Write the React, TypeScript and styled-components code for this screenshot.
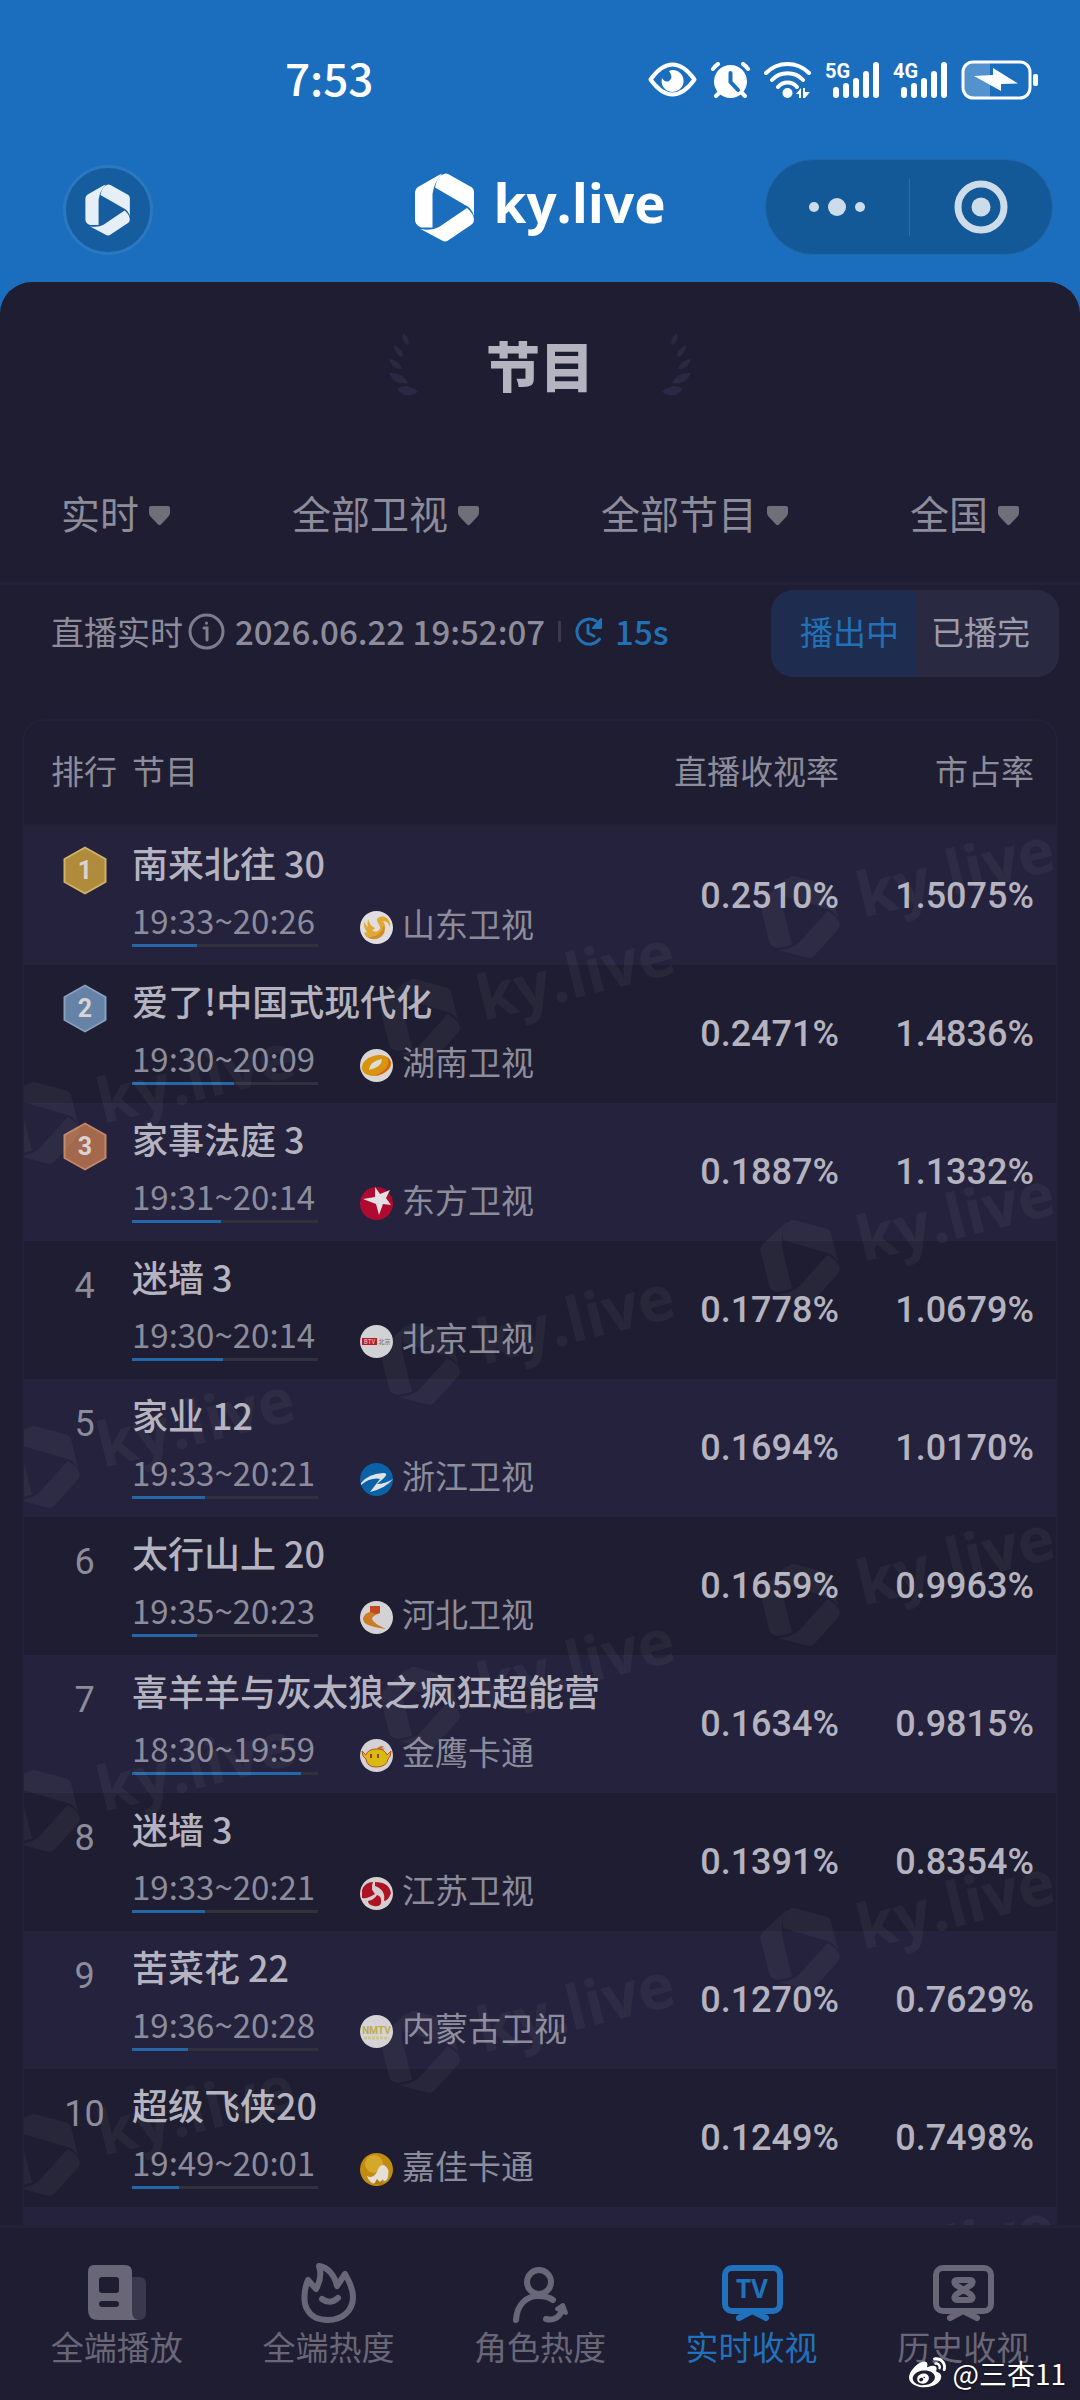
import { useState } from "react";
import type { ReactNode } from "react";
import { FaWeibo } from "react-icons/fa";
import styled, { createGlobalStyle } from "styled-components";

const GlobalStyle = createGlobalStyle`
  * {
    box-sizing: border-box;
  }
  body {
    margin: 0;
    background: #1f1d31;
    color: #8c8c9b;
    font-family: "Noto Sans CJK SC", sans-serif;
    font-size: 33px;
  }
  button, select {
    margin: 0;
    padding: 0;
    border: none;
    background: none;
    color: inherit;
    font: inherit;
    cursor: pointer;
  }
  a {
    color: inherit;
    text-decoration: none;
  }
  svg {
    display: block;
    flex-shrink: 0;
  }
`;

const numeric = `Roboto, "Noto Sans CJK SC", sans-serif`;

const Screen = styled.div`
  display: flex;
  flex-direction: column;
  height: 100vh;
  background: #1a6ebd;
`;

const StatusBar = styled.div`
  display: flex;
  align-items: center;
  justify-content: space-between;
  height: 159px;
  padding: 0 41px 0 285px;
  color: white;
  flex-shrink: 0;
`;

const Clock = styled.time`
  padding-bottom: 6px;
  font-size: 44px;
  font-weight: 500;
`;

const StatusIcons = styled.div`
  display: flex;
  align-items: center;
  gap: 14px;
`;

const TitleBar = styled.header`
  display: grid;
  grid-template-columns: 1fr auto 1fr;
  align-items: center;
  height: 96px;
  margin-bottom: 27px;
  padding: 0 27px;
  flex-shrink: 0;
`;

const HomeButton = styled.button`
  display: flex;
  align-items: center;
  justify-content: center;
  align-self: end;
  width: 90px;
  height: 90px;
  margin-left: 36px;
  border: 3px solid #2a78c0;
  border-radius: 50%;
  background: #155d9f;
  color: #e6eff8;
`;

const Brand = styled.div`
  display: flex;
  align-items: center;
  gap: 19px;
  color: white;
  font-family: "Open Sans", sans-serif;
  font-size: 53px;
  font-weight: 700;
  line-height: 60px;
  span {
    padding-bottom: 8px;
  }
`;

const Capsule = styled.div`
  display: flex;
  align-items: center;
  justify-self: end;
  width: 288px;
  height: 96px;
  border: 1px solid #2268a8;
  border-radius: 48px;
  background: #145997;
  color: #cddcea;
  button {
    display: flex;
    align-items: center;
    justify-content: center;
    flex: 1;
    height: 57px;
  }
  button + button {
    border-left: 1px solid #2a6cab;
  }
`;

const Panel = styled.main`
  flex: 1;
  min-height: 0;
  overflow: hidden;
  border-radius: 32px 32px 0 0;
  background: #1f1d31;
`;

const Heading = styled.div`
  display: flex;
  align-items: center;
  justify-content: center;
  gap: 67px;
  height: 166px;
  h1 {
    margin: 0;
    color: #b4b3bf;
    font-size: 54px;
    font-weight: 900;
    line-height: 60px;
  }
`;

const Filters = styled.div`
  display: flex;
  justify-content: space-between;
  align-items: center;
  height: 137px;
  padding: 2px 61px 0;
  border-bottom: 3px solid #232137;
`;

const Filter = styled.label`
  display: flex;
  align-items: center;
  gap: 9px;
  select {
    appearance: none;
    padding-bottom: 8px;
    font-size: 39px;
    line-height: 58px;
  }
`;

const Toolbar = styled.div`
  display: flex;
  align-items: center;
  justify-content: space-between;
  padding: 5px 21px 42px 51px;
`;

const Live = styled.div`
  display: flex;
  align-items: center;
  padding-bottom: 5px;
  line-height: 48px;
`;

const InfoButton = styled.button`
  margin: 0 10px 0 5px;
`;

const Updated = styled.time`
  font-weight: 500;
`;

const Separator = styled.span`
  width: 3px;
  height: 21px;
  margin: 0 13px;
  background: #3b394c;
`;

const Countdown = styled.span`
  display: flex;
  align-items: center;
  gap: 12px;
  color: #2270b6;
  font-weight: 500;
`;

const Toggle = styled.div`
  display: flex;
  overflow: hidden;
  border-radius: 22px;
`;

const ToggleButton = styled.button<{ $active: boolean }>`
  height: 87px;
  padding: 0 16px 6px;
  background: ${({ $active }) => ($active ? "#1e2c4f" : "#2a2942")};
  color: ${({ $active }) => ($active ? "#2270b6" : "#9d9cab")};
  &:first-child {
    padding-left: 29px;
  }
  &:last-child {
    padding-right: 29px;
  }
`;

const Card = styled.section`
  position: relative;
  margin: 0 22px;
  overflow: hidden;
  border: 2px solid #232137;
  border-radius: 22px;
`;

const Watermark = styled.svg`
  position: absolute;
  top: 0;
  left: 0;
  width: 100%;
  height: 100%;
  color: white;
  opacity: 0.04;
  pointer-events: none;
`;

const Table = styled.table`
  width: 100%;
  border-collapse: separate;
  border-spacing: 0;
  table-layout: fixed;
  th, td {
    padding: 0;
    text-align: left;
  }
  th {
    height: 106px;
    padding-bottom: 6px;
    border-bottom: 3px solid #232137;
    font-weight: 400;
    line-height: 48px;
  }
  tbody tr {
    height: 138px;
  }
  tbody tr:nth-child(odd) {
    background: #25223d;
  }
  th:nth-child(1) {
    width: 108px;
    padding-left: 27px;
  }
  th:nth-child(3) {
    width: 200px;
    text-align: right;
  }
  th:nth-child(4) {
    width: 217px;
    padding-right: 22px;
    text-align: right;
  }
`;

const RankCell = styled.td`
  vertical-align: top;
  && {
    padding: 19px 15px 0 28px;
    text-align: center;
  }
  svg {
    margin: 0 auto;
  }
`;

const Rank = styled.span`
  font-family: ${numeric};
  font-size: 36px;
  line-height: 48px;
`;

const ShowCell = styled.td`
  vertical-align: top;
  && {
    padding-top: 11px;
  }
`;

const Show = styled.div`
  color: #b4b3bf;
  font-size: 36px;
  font-weight: 500;
  line-height: 48px;
  white-space: nowrap;
`;

const Meta = styled.div`
  display: flex;
  align-items: flex-start;
  gap: 42px;
  margin-top: 13px;
`;

const Slot = styled.div`
  width: 186px;
  line-height: 42px;
  white-space: nowrap;
`;

const Track = styled.div`
  height: 3px;
  margin-top: 3px;
  background: #32303d;
`;

const Progress = styled.div`
  height: 100%;
  background: #2568aa;
`;

const Channel = styled.div`
  display: flex;
  align-items: flex-end;
  gap: 9px;
  margin-top: 3px;
  line-height: 42px;
  white-space: nowrap;
`;

const Score = styled.td`
  color: #b4b3bf;
  font-family: ${numeric};
  font-size: 36px;
  font-weight: 500;
  && {
    text-align: right;
  }
  &:last-child {
    padding-right: 22px;
  }
`;

const TabBar = styled.nav`
  position: relative;
  display: flex;
  height: 175px;
  padding: 35px 11px 0;
  border-top: 3px solid #232137;
  background: #1f1d31;
  flex-shrink: 0;
`;

const Tab = styled.a<{ $active?: boolean }>`
  display: flex;
  flex-direction: column;
  align-items: center;
  flex: 1;
  color: ${({ $active }) => ($active ? "#2172bd" : "#696777")};
  line-height: 46px;
`;

const Credit = styled.div`
  position: absolute;
  right: 14px;
  bottom: 8px;
  display: flex;
  align-items: center;
  gap: 6px;
  color: white;
  font-size: 28px;
  line-height: 38px;
  text-shadow: 0 1px 3px rgba(0, 0, 0, 0.6);
`;

function LogoMark({ width = 60, height = 69 }: { width?: number; height?: number }) {
  return (
    <svg width={width} height={height} viewBox="0 0 60 69" fill="currentColor" aria-hidden="true">
      <path d="M0 19Q0 16 3 14L24 2Q26 1 27 1Q19 9 17.500 21V54.500H6Q0 52 0 47Z" />
      <path d="M20 14.500Q22 3 29 1Q31 0 34 1.500L57 14.500Q59 16 59 19V43Q57 35 50 32Z" />
      <path d="M52 35Q59 41 59 47Q59 50 56 52L33 67.500Q30 69.500 27 67.500L5.500 56Q17 58 24 54Z" />
    </svg>
  );
}

function Signal({ label }: { label: string }) {
  return (
    <svg width="54" height="36" viewBox="0 0 54 36" fill="currentColor">
      <text x="0" y="16" fontFamily="Roboto, sans-serif" fontWeight="700" fontSize="20">{label}</text>
      <rect x="8" y="25" width="6" height="11" rx="3" />
      <rect x="18" y="21" width="6" height="15" rx="3" />
      <rect x="28" y="16" width="6" height="20" rx="3" />
      <rect x="38" y="9" width="6" height="27" rx="3" />
      <rect x="48" y="0" width="6" height="36" rx="3" />
    </svg>
  );
}

function Laurel({ flip }: { flip?: boolean }) {
  return (
    <svg width="30" height="64" viewBox="0 0 30 64" fill="#2a2843" aria-hidden="true">
      <g transform={flip ? "translate(30 0) scale(-1 1)" : undefined}>
        <path d="M14 0Q22 5 19 12Q12 9 14 0Z" />
        <path d="M5 12Q14 16 14 24Q5 22 5 12Z" />
        <path d="M0 26Q10 27 13 36Q3 37 0 26Z" />
        <path d="M0 40Q14 39 19 50Q6 53 0 40Z" />
        <path d="M8 56Q18 49 29 59Q16 67 8 56Z" />
      </g>
    </svg>
  );
}

const medals: Record<number, [string, string]> = {
  1: ["#b08b3c", "#cfb266"],
  2: ["#6682a7", "#859fbe"],
  3: ["#a4694c", "#c18766"],
};

function Medal({ rank }: { rank: number }) {
  const [fill, edge] = medals[rank];
  return (
    <svg width="44" height="49" viewBox="0 0 44 49">
      <path d="M22 1.500L42.500 13V36L22 47.500L1.500 36V13Z" fill={fill} stroke={edge} strokeWidth="2" strokeLinejoin="round" />
      <text x="22" y="33" textAnchor="middle" fontFamily="Roboto, sans-serif" fontWeight="700" fontSize="25" fill="#d8d4d2">{rank}</text>
    </svg>
  );
}

const channelLogos: Record<string, ReactNode> = {
  山东卫视: (
    <>
      <circle cx="16.500" cy="16.500" r="16.500" fill="#e0dee0" />
      <path d="M4 10Q5 14 8 16Q7 13 8 8Q10 15 15 17Q14 19 12 19Q15 22 18 20Q22 17 18 12Q16 9 18 7Q23 3 28 8Q31 12 30 16Q28 10 23 10Q27 16 24 21Q20 28 13 28Q5 28 4 21Q6 22 7 21Q3 16 4 10Z" fill="#e2a836" />
      <path d="M8 26Q20 27 24 14Q27 23 19 27Q13 30 8 26Z" fill="#d08d2c" />
    </>
  ),
  湖南卫视: (
    <>
      <circle cx="16.500" cy="16.500" r="16.500" fill="#d9d7d6" />
      <ellipse cx="16.500" cy="16.500" rx="15" ry="10" fill="#d9940f" transform="rotate(-14 16.500 16.500)" />
      <path d="M27 8Q33 12 29 19Q24 26 14 27Q25 23 28 16Q29 11 27 8Z" fill="#d0641c" />
      <path d="M9 21Q10 12 22 10Q22 18 9 21Z" fill="#dedbd8" />
    </>
  ),
  东方卫视: (
    <>
      <circle cx="16.500" cy="16.500" r="16.500" fill="#b00a31" />
      <path d="M15 0L20 7L30 3L26 11L31 18L23 17L19 28L16 17L3 12L15 10Z" fill="#e3dfe2" />
    </>
  ),
  北京卫视: (
    <>
      <circle cx="16.500" cy="16.500" r="16.500" fill="#d2d1d5" />
      <rect x="2" y="13" width="15" height="7" fill="#b81a24" />
      <text x="9.500" y="19" textAnchor="middle" fontSize="6" fontWeight="700" fill="#d9a8a8">BTV</text>
      <text x="24.500" y="19" textAnchor="middle" fontSize="6" fontWeight="700" fill="#8a8989">北京</text>
    </>
  ),
  浙江卫视: (
    <>
      <circle cx="16.500" cy="16.500" r="16.500" fill="#0c62a6" />
      <path d="M1 20Q8 11 23 10Q29 10 24 15L17 21Q25 21 33 16Q26 25 10 29L20 16Q11 14 1 22Z" fill="#dde3e9" />
    </>
  ),
  河北卫视: (
    <>
      <circle cx="16.500" cy="16.500" r="16.500" fill="#d5d2d6" />
      <path d="M10 5L13 6L15 5L20 5V12Q12 15 12 18Q13 22 26 28Q17 27 11 25Q2 22 3 17Q5 12 10 11Z" fill="#cc7c24" />
      <path d="M10 5H20V12L16 13L10 11Z" fill="#c24a22" />
    </>
  ),
  金鹰卡通: (
    <>
      <circle cx="16.500" cy="16.500" r="16.500" fill="#d5d2d6" />
      <path d="M17 11Q17 7 24 7L21 10L25 9L21 13Z" fill="#c4702d" />
      <path d="M2 12L6 16Q8 10 16 10Q24 9 27 16L31 12Q31 18 28 20Q27 28 16 28Q7 28 6 20Q2 18 2 12Z" fill="#d9ba10" stroke="#b8502a" strokeWidth="1" />
      <path d="M11 15V19M18 15V19" stroke="#a03422" strokeWidth="2" />
    </>
  ),
  江苏卫视: (
    <>
      <circle cx="16.500" cy="16.500" r="16.500" fill="#d5cfd2" />
      <path d="M2 13Q5 5 13 5Q10 12 15 17Q8 22 2 21Z" fill="#ae1323" />
      <path d="M15 5Q29 5 31 16Q28 24 24 24Q26 13 15 9Z" fill="#ae1323" />
      <path d="M17 18Q22 19 21 26Q20 30 14 29Q8 28 8 24Q14 23 17 18Z" fill="#ae1323" />
    </>
  ),
  内蒙古卫视: (
    <>
      <circle cx="16.500" cy="16.500" r="16.500" fill="#d5d3d7" />
      <text x="16.500" y="19" textAnchor="middle" fontFamily="Roboto, sans-serif" fontSize="10" fontWeight="700" fill="#bdab4c">NMTV</text>
      <path d="M4 23H29" stroke="#cdc593" strokeWidth="3" strokeDasharray="3 1" />
    </>
  ),
  嘉佳卡通: (
    <>
      <circle cx="16.500" cy="16.500" r="16.500" fill="#c08c11" />
      <circle cx="14" cy="11" r="9" fill="#d6a82a" />
      <path d="M7 23Q13 26 17 19Q19 11 24 12Q30 15 28 24Q26 30 23 27Q21 32 16 31Q9 30 7 23Z" fill="#e3dfd7" />
      <path d="M14 31L17 26L20 29L23 26L22 32Z" fill="#b07c10" />
    </>
  ),
};

const rows = [
  { show: "南来北往 30", slot: "19:33~20:26", progress: 35, channel: "山东卫视", rating: "0.2510%", share: "1.5075%" },
  { show: "爱了!中国式现代化", slot: "19:30~20:09", progress: 55, channel: "湖南卫视", rating: "0.2471%", share: "1.4836%" },
  { show: "家事法庭 3", slot: "19:31~20:14", progress: 48, channel: "东方卫视", rating: "0.1887%", share: "1.1332%" },
  { show: "迷墙 3", slot: "19:30~20:14", progress: 49, channel: "北京卫视", rating: "0.1778%", share: "1.0679%" },
  { show: "家业 12", slot: "19:33~20:21", progress: 39, channel: "浙江卫视", rating: "0.1694%", share: "1.0170%" },
  { show: "太行山上 20", slot: "19:35~20:23", progress: 35, channel: "河北卫视", rating: "0.1659%", share: "0.9963%" },
  { show: "喜羊羊与灰太狼之疯狂超能营", slot: "18:30~19:59", progress: 91, channel: "金鹰卡通", rating: "0.1634%", share: "0.9815%" },
  { show: "迷墙 3", slot: "19:33~20:21", progress: 39, channel: "江苏卫视", rating: "0.1391%", share: "0.8354%" },
  { show: "苦菜花 22", slot: "19:36~20:28", progress: 30, channel: "内蒙古卫视", rating: "0.1270%", share: "0.7629%" },
  { show: "超级飞侠20", slot: "19:49~20:01", progress: 25, channel: "嘉佳卡通", rating: "0.1249%", share: "0.7498%" },
];

const filters = ["实时", "全部卫视", "全部节目", "全国"];
const toggles = ["播出中", "已播完"];

const tabs: { label: string; icon: ReactNode }[] = [
  {
    label: "全端播放",
    icon: (
      <>
        <path d="M46 14H54Q61 14 61 21V50Q61 57 54 57H46Z" fill="#3a384c" />
        <path fillRule="evenodd" d="M9 2H40Q47 2 47 9V48Q47 57 54 57H13Q3 57 3 47V9Q3 2 9 2ZM17 14Q14 14 14 17V27Q14 30 17 30H31Q34 30 34 27V17Q34 14 31 14ZM17 38Q14 38 14 41Q14 44 17 44H31Q34 44 34 41Q34 38 31 38Z" fill="currentColor" />
      </>
    ),
  },
  {
    label: "全端热度",
    icon: (
      <g fill="none" stroke="currentColor" strokeWidth="6" strokeLinecap="round" strokeLinejoin="round">
        <path d="M12 17C8 26 7 40 11 46C15 54 23 57 32 57C46 57 57 48 57 34C57 26 52 16 49 11L41 23C39 13 32 4 23 3C26 12 24 19 20 26Z" />
        <path d="M26 36Q34 42 42 35" />
      </g>
    ),
  },
  {
    label: "角色热度",
    icon: (
      <g fill="none" stroke="currentColor" strokeWidth="6" strokeLinecap="round" strokeLinejoin="round">
        <circle cx="31" cy="19" r="12" />
        <path d="M8 57C9 41 19 33 30 33C36 33 41 34 45 37" />
        <path d="M38 56C46 58 51 54 54 48" />
        <path d="M55 42L58 50L49 46Z" fill="currentColor" strokeWidth="4" />
      </g>
    ),
  },
  {
    label: "实时收视",
    icon: (
      <g fill="none" stroke="currentColor" strokeWidth="6" strokeLinecap="round" strokeLinejoin="round">
        <rect x="5" y="5" width="55" height="43" rx="7" />
        <path d="M19 55L32 48L46 55" />
        <text x="32" y="35" textAnchor="middle" fontFamily="Open Sans, sans-serif" fontSize="26" fontWeight="700" fill="currentColor" stroke="none">TV</text>
      </g>
    ),
  },
  {
    label: "历史收视",
    icon: (
      <g fill="none" stroke="currentColor" strokeWidth="6" strokeLinecap="round" strokeLinejoin="round">
        <rect x="5" y="5" width="55" height="43" rx="7" />
        <path d="M19 55L32 48L46 55" />
        <path d="M27 17H38C43 17 42 20 40 22L26 31C22 34 23 37 27 37H38C42 37 43 34 39 31L25 22C23 20 22 17 27 17Z" strokeWidth="6" />
      </g>
    ),
  },
];

// staggered grid of slanted brand marks laid over the ranking
const marks = [0, 1, 2, 3, 4].flatMap((row) =>
  [0, 1, 2].map((col) => ({ x: 17 + col * 380, y: 402 - col * 103 + row * 344 }))
);

export default function App() {
  const [status, setStatus] = useState("播出中");
  const [tab, setTab] = useState("实时收视");

  return (
    <Screen>
      <GlobalStyle />
      <StatusBar>
        <Clock>7:53</Clock>
        <StatusIcons>
          <svg width="49" height="35" viewBox="0 0 49 35">
            <path d="M2.500 17.500C10 7 17 2.500 24.500 2.500S39 7 46.500 17.500C39 28 32 32.500 24.500 32.500S10 28 2.500 17.500Z" fill="none" stroke="white" strokeWidth="4" strokeLinejoin="round" />
            <path d="M24 8A11 11 0 1 1 14 16Q17 21 21 19Q26 16 21 9Z" fill="white" />
          </svg>
          <svg width="39" height="36" viewBox="0 0 39 36" fill="none" stroke="white" strokeLinecap="round">
            <circle cx="19.500" cy="19.500" r="16.500" fill="white" stroke="none" />
            <path d="M2 7Q4 4 7 2M32 2Q35 4 37 7M5 34L9 30M34 34L30 30" strokeWidth="4" />
            <path d="M19.500 11V20L27 28" stroke="#1a6ebd" strokeWidth="4" />
          </svg>
          <svg width="47" height="36" viewBox="0 0 47 36" fill="none" stroke="white" strokeWidth="4" strokeLinecap="round">
            <path d="M2 11C14 -1 33 -1 45 11M8 18C16 9 31 9 39 18M14 25C19 19 28 19 33 25" />
            <circle cx="23.500" cy="31" r="5" fill="white" stroke="none" />
            <path d="M32 32L37 26V36H35V32ZM39 26H41V30H46L41 36H39Z" fill="white" stroke="none" />
          </svg>
          <Signal label="5G" />
          <Signal label="4G" />
          <svg width="78" height="40" viewBox="0 0 78 40">
            <path d="M12 3H29V37H12Q3 37 3 28V12Q3 3 12 3Z" fill="white" opacity="0.25" />
            <rect x="2" y="2" width="67" height="36" rx="10" fill="none" stroke="white" strokeWidth="3" />
            <rect x="72" y="14" width="5" height="12" rx="2" fill="white" />
            <path d="M13 16L32 15V8L57 23.500L40 24V31Z" fill="white" />
          </svg>
        </StatusIcons>
      </StatusBar>

      <TitleBar>
        <HomeButton aria-label="首页">
          <LogoMark width={46} height={52} />
        </HomeButton>
        <Brand>
          <LogoMark />
          <span>ky.live</span>
        </Brand>
        <Capsule>
          <button aria-label="更多">
            <svg width="58" height="20" viewBox="0 0 58 20" fill="currentColor">
              <circle cx="6" cy="10" r="5" />
              <circle cx="29" cy="10" r="9" />
              <circle cx="52" cy="10" r="5" />
            </svg>
          </button>
          <button aria-label="关闭">
            <svg width="54" height="54" viewBox="0 0 54 54" fill="currentColor">
              <circle cx="27" cy="27" r="23" fill="none" stroke="currentColor" strokeWidth="7" />
              <circle cx="27" cy="27" r="9.500" />
            </svg>
          </button>
        </Capsule>
      </TitleBar>

      <Panel>
        <Heading>
          <Laurel />
          <h1>节目</h1>
          <Laurel flip />
        </Heading>
        <Filters>
          {filters.map((name) => (
            <Filter key={name}>
              <select aria-label={name}>
                <option>{name}</option>
              </select>
              <svg width="21" height="20" viewBox="0 0 21 20" fill="#6e6f78">
                <path d="M2 0H19Q21 0 21 2V7Q21 9 19 11L12 18.500Q10.500 20 9 18.500L2 11Q0 9 0 7V2Q0 0 2 0Z" />
              </svg>
            </Filter>
          ))}
        </Filters>
        <Toolbar>
          <Live>
            直播实时
            <InfoButton aria-label="说明">
              <svg width="37" height="37" viewBox="0 0 37 37" fill="none" stroke="#7c7c8a" strokeWidth="3" strokeLinecap="round">
                <circle cx="18.500" cy="18.500" r="16.500" />
                <path d="M16 15H19V27M18.500 10V10.200" />
              </svg>
            </InfoButton>
            <Updated>2026.06.22 19:52:07</Updated>
            <Separator />
            <Countdown>
              <svg width="29" height="30" viewBox="0 0 29 30" fill="none" stroke="currentColor" strokeWidth="3" strokeLinecap="round">
                <path d="M22 5A12.500 12.500 0 1 0 25.500 23" />
                <path d="M14 9V17L20 20" />
                <path d="M27 3V12H19Z" fill="currentColor" strokeWidth="2" strokeLinejoin="round" />
              </svg>
              15s
            </Countdown>
          </Live>
          <Toggle>
            {toggles.map((name) => (
              <ToggleButton
                key={name}
                $active={status === name}
                aria-pressed={status === name}
                onClick={() => setStatus(name)}
              >
                {name}
              </ToggleButton>
            ))}
          </Toggle>
        </Toolbar>

        <Card>
          <Table>
            <thead>
              <tr>
                <th>排行</th>
                <th>节目</th>
                <th>直播收视率</th>
                <th>市占率</th>
              </tr>
            </thead>
            <tbody>
              {rows.map((row, i) => (
                <tr key={i}>
                  <RankCell>
                    {i < 3 ? <Medal rank={i + 1} /> : <Rank>{i + 1}</Rank>}
                  </RankCell>
                  <ShowCell>
                    <Show>{row.show}</Show>
                    <Meta>
                      <Slot>
                        {row.slot}
                        <Track>
                          <Progress style={{ width: `${row.progress}%` }} />
                        </Track>
                      </Slot>
                      <Channel>
                        <svg width="33" height="33" viewBox="0 0 33 33">{channelLogos[row.channel]}</svg>
                        {row.channel}
                      </Channel>
                    </Meta>
                  </ShowCell>
                  <Score>{row.rating}</Score>
                  <Score>{row.share}</Score>
                </tr>
              ))}
              <tr>
                <td colSpan={4} />
              </tr>
            </tbody>
          </Table>
          <Watermark aria-hidden="true">
            {marks.map(({ x, y }) => (
              <g key={`${x}-${y}`} transform={`translate(${x} ${y}) rotate(-14)`} fill="currentColor">
                <g transform="translate(-37 -43)">
                  <LogoMark width={74} height={86} />
                </g>
                <text x="60" y="16" fontFamily="Open Sans, sans-serif" fontSize="62" fontWeight="700">ky.live</text>
              </g>
            ))}
          </Watermark>
        </Card>
      </Panel>

      <TabBar>
        {tabs.map(({ label, icon }) => (
          <Tab key={label} href="#" $active={tab === label} onClick={() => setTab(label)}>
            <svg width="64" height="60" viewBox="0 0 64 60">{icon}</svg>
            {label}
          </Tab>
        ))}
        <Credit>
          <FaWeibo size={37} />
          @三杏11
        </Credit>
      </TabBar>
    </Screen>
  );
}
